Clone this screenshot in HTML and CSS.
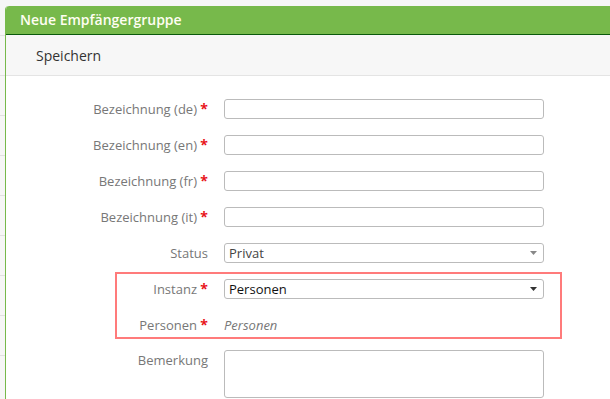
FILE: index.html
```html
<!DOCTYPE html>
<html lang="de">
<head>
  <meta charset="UTF-8" />
  <title>Neue Empfängergruppe</title>
  <link rel="stylesheet" href="styles.css">
</head>
<body>
  <div class="dialog">
    <div class="dialog-title">Neue Empfängergruppe</div>
    <div class="toolbar">
      <span class="toolbar-btn">Speichern</span>
    </div>

    <form class="form">
      <div class="row">
        <label for="bez-de">Bezeichnung (de) <span class="req">*</span></label>
        <input id="bez-de" type="text" />
      </div>
      <div class="row">
        <label for="bez-en">Bezeichnung (en) <span class="req">*</span></label>
        <input id="bez-en" type="text" />
      </div>
      <div class="row">
        <label for="bez-fr">Bezeichnung (fr) <span class="req">*</span></label>
        <input id="bez-fr" type="text" />
      </div>
      <div class="row">
        <label for="bez-it">Bezeichnung (it) <span class="req">*</span></label>
        <input id="bez-it" type="text" />
      </div>
      <div class="row">
        <label for="status">Status</label>
        <div class="select">
          <select id="status">
            <option>Privat</option>
            <option>Öffentlich</option>
          </select>
          <svg class="caret" width="7" height="4" viewBox="0 0 7 4"><path d="M0 0h7L3.5 4z" fill="#888"/></svg>
        </div>
      </div>

      <div class="highlight">
        <div class="row">
          <label for="instanz">Instanz <span class="req">*</span></label>
          <div class="select active">
            <select id="instanz">
              <option>Personen</option>
              <option>Organisationen</option>
            </select>
            <svg class="caret" width="7" height="4" viewBox="0 0 7 4"><path d="M0 0h7L3.5 4z" fill="#333"/></svg>
          </div>
        </div>
        <div class="row">
          <label>Personen <span class="req">*</span></label>
          <span class="placeholder">Personen</span>
        </div>
      </div>

      <div class="row top">
        <label for="bemerkung">Bemerkung</label>
        <textarea id="bemerkung"></textarea>
      </div>
    </form>
  </div>
</body>
</html>
```

FILE: styles.css
```css
body {
  margin: 0;
  font-family: "Open Sans", sans-serif;
  font-size: 13px;
  color: #333;
  background-color: #f6f6f6;
  background-image: repeating-linear-gradient(to bottom, transparent 0 39px, #e1e1e1 39px 40px);
  background-position: 0 -4px;
  height: 100vh;
  overflow: hidden;
}
.dialog {
  position: absolute;
  top: 6px;
  left: 5px;
  right: 0;
  bottom: 0;
  overflow: hidden;
  background: white;
  border-left: 1px solid #77b94b;
  border-top-left-radius: 4px;
}
.dialog-title {
  background: #77b94b;
  color: #fffef2;
  font-weight: 600;
  font-size: 14px;
  height: 28px;
  line-height: 28px;
  padding-left: 14px;
  border-bottom: 1px solid #0b5a0b;
  border-top-left-radius: 3px;
}
.toolbar {
  background: #f7f7f7;
  height: 40px;
  border-bottom: 1px solid #e4e4e4;
  display: flex;
  align-items: center;
  padding-left: 30px;
}
.toolbar-btn {
  font-size: 14px;
  color: #333;
}
.form {
  padding-top: 23px;
  display: flex;
  flex-direction: column;
  gap: 16px;
}
.row {
  display: grid;
  grid-template-columns: 202px 320px;
  column-gap: 16px;
  align-items: center;
}
.row.top {
  align-items: start;
}
label {
  text-align: right;
  color: #777;
  line-height: 20px;
  white-space: nowrap;
}
.req {
  color: #e8141b;
  font-weight: bold;
  font-size: 14px;
}
input, select, textarea {
  box-sizing: border-box;
  font-family: "Open Sans", sans-serif;
  font-size: 13px;
  border: 1px solid #bbb;
  border-radius: 3px;
  background: white;
  margin: 0;
  outline: none;
}
input {
  height: 20px;
  width: 320px;
  padding: 0 4px;
}
.select {
  position: relative;
  width: 320px;
  height: 20px;
}
.select select {
  appearance: none;
  width: 100%;
  height: 20px;
  padding: 0 20px 0 4px;
  line-height: 18px;
  color: #444;
}
.select.active select {
  color: #111;
}
.caret {
  position: absolute;
  right: 7px;
  top: 8px;
}
.highlight {
  margin: -7px 0 -5px 109px;
  width: 443px;
  border: 2px solid #ff7b7b;
  padding: 5px 0 2px 0;
  display: flex;
  flex-direction: column;
  gap: 16px;
}
.highlight .row {
  grid-template-columns: 91px 320px;
}
.placeholder {
  font-style: italic;
  color: #777;
  line-height: 20px;
}
textarea {
  width: 320px;
  height: 48px;
  resize: none;
}
```
